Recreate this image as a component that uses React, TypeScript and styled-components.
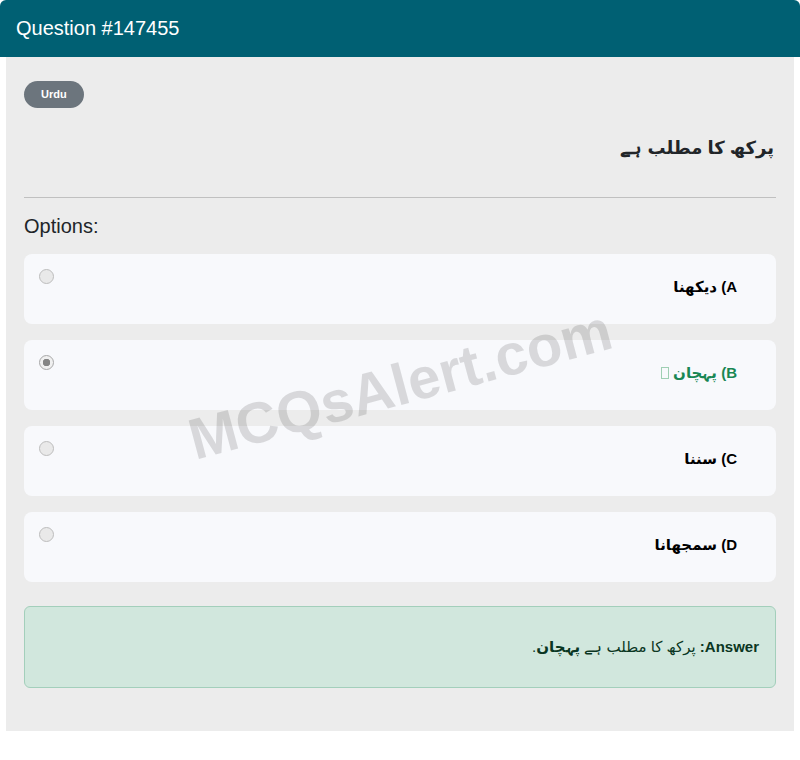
import React from 'react'
import styled, {createGlobalStyle} from 'styled-components'

const GlobalStyle = createGlobalStyle`
  html, body {
    margin: 0;
    padding: 0;
    background: #fff;
  }
  body {
    font-family: "Liberation Sans", Arial, "DejaVu Sans", sans-serif;
    color: #212529;
  }
`

type Option = { key: string, text: string, correct?: boolean }

const options: Option[] = [
    { key: 'A', text: 'دیکھنا' },
    { key: 'B', text: 'پہچان', correct: true },
    { key: 'C', text: 'سننا' },
    { key: 'D', text: 'سمجھانا' },
]

export default function App() {
    return (
        <>
            <GlobalStyle />
            <Card>
                <Header>Question #147455</Header>
                <Body>
                    <Badge>Urdu</Badge>
                    <QuestionText dir="rtl">پرکھ کا مطلب ہے</QuestionText>
                    <Divider />
                    <OptionsTitle>Options:</OptionsTitle>
                    <OptionList>
                        {options.map(o => (
                            <OptionBox key={o.key}>
                                <Radio type="radio" name="q" disabled checked={!!o.correct} readOnly />
                                <OptionLabel dir="rtl" $correct={!!o.correct}>
                                    {o.key}) {o.text}
                                    {o.correct && <> <Tofu /></>}
                                </OptionLabel>
                            </OptionBox>
                        ))}
                    </OptionList>
                    <AnswerBox dir="rtl">
                        <strong>Answer:</strong> پرکھ کا مطلب ہے <b>پہچان</b>.
                    </AnswerBox>
                    <Watermark>MCQsAlert.com</Watermark>
                </Body>
                <Footer />
            </Card>
        </>
    )
}

const Card = styled.div`
  width: 800px;
  background: #fff;
  border-radius: 6px;
`

const Header = styled.div`
  height: 57px;
  box-sizing: border-box;
  padding: 0 16px;
  display: flex;
  align-items: center;
  background-color: #006073;
  color: #fff;
  font-size: 20px;
  border-radius: 6px 6px 0 0;
`

const Body = styled.div`
  position: relative;
  margin: 0 6px;
  padding: 24px 18px 43px;
  background: #ececec;
  overflow: hidden;
`

const Footer = styled.div`
  height: 6px;
`

const Badge = styled.span`
  display: inline-block;
  padding: 6px 17px;
  border-radius: 14px;
  background: #6c757d;
  color: #fff;
  font-size: 11px;
  line-height: 15px;
  font-weight: 700;
`

const QuestionText = styled.h5`
  margin: 26px 2px 0 0;
  font-size: 18px;
  line-height: 28px;
  font-weight: 700;
  text-align: right;
  color: #212529;
`

const Divider = styled.hr`
  margin: 35px 0 0;
  border: 0;
  border-top: 1px solid #c0c0c0;
`

const OptionsTitle = styled.div`
  margin-top: 16px;
  font-size: 20px;
  line-height: 24px;
  color: #212529;
`

const OptionList = styled.div`
  margin-top: 16px;
  display: flex;
  flex-direction: column;
  gap: 16px;
`

const OptionBox = styled.label`
  display: flex;
  align-items: flex-start;
  min-height: 70px;
  box-sizing: border-box;
  padding: 14px 15px;
  background: #f8f9fc;
  border-radius: 8px;
`

const Radio = styled.input`
  appearance: none;
  margin: 1px 0 0 0;
  width: 15px;
  height: 15px;
  border-radius: 50%;
  border: 1px solid #bdbdbd;
  background: #e9e9e9;
  box-sizing: border-box;

  &:checked {
    border-color: #a8a8a8;
    background: radial-gradient(circle, #858585 0 3.5px, #f0f0f0 4px);
  }
`

const OptionLabel = styled.div<{ $correct: boolean }>`
  flex: 1;
  padding: 9px 24px 0 0;
  font-size: 15px;
  line-height: 20px;
  font-weight: 700;
  text-align: right;
  color: ${({ $correct }) => $correct ? '#198754' : '#000'};
`

const Tofu = styled.span`
  display: inline-block;
  width: 6px;
  height: 10px;
  border: 1px solid #9fcfb3;
  vertical-align: -1px;
`

const AnswerBox = styled.div`
  margin-top: 24px;
  padding: 29px 16px;
  border: 1px solid #a3cfbb;
  border-radius: 6px;
  background: #d1e7dd;
  color: #0a3622;
  font-size: 15px;
  line-height: 22px;
  text-align: right;

  strong {
    font-weight: 700;
  }
`

const Watermark = styled.div`
  position: absolute;
  left: 50%;
  top: 327px;
  transform: translate(-50%, -50%) rotate(-15deg);
  font-size: 58px;
  font-weight: 700;
  color: rgba(0, 0, 0, 0.13);
  white-space: nowrap;
  pointer-events: none;
  user-select: none;
`
